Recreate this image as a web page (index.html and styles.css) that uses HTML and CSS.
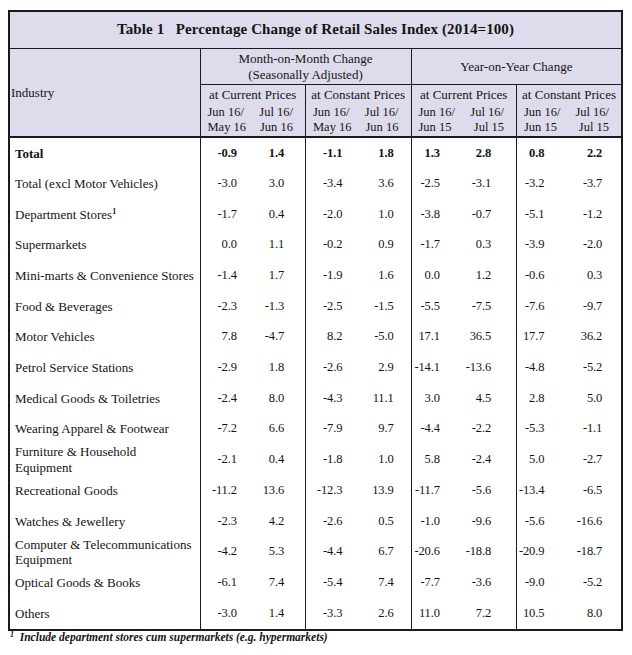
FILE: index.html
```html
<!DOCTYPE html>
<html>
<head>
<meta charset="utf-8">
<link rel="stylesheet" href="styles.css">
</head>
<body>
<table class="tbl">
  <colgroup>
    <col class="w-ind">
    <col class="w-num"><col class="w-num"><col class="w-num"><col class="w-num">
    <col class="w-num"><col class="w-num"><col class="w-num"><col class="w-num">
  </colgroup>
  <thead>
    <tr class="r-title"><th colspan="9" class="title">Table 1&nbsp;&nbsp;&nbsp;Percentage Change of Retail Sales Index (2014=100)</th></tr>
    <tr class="r-a">
      <th rowspan="3" class="ind-h">Industry</th>
      <th colspan="4" class="grp">Month-on-Month Change<br>(Seasonally Adjusted)</th>
      <th colspan="4" class="grp">Year-on-Year Change</th>
    </tr>
    <tr class="r-b">
      <th colspan="2" class="sub">at Current Prices</th>
      <th colspan="2" class="sub">at Constant Prices</th>
      <th colspan="2" class="sub">at Current Prices</th>
      <th colspan="2" class="sub">at Constant Prices</th>
    </tr>
    <tr class="r-c">
      <th class="d dl gl">Jun 16/<br>May 16</th><th class="d dr">Jul 16/<br>Jun 16</th>
      <th class="d dl gl">Jun 16/<br>May 16</th><th class="d dr">Jul 16/<br>Jun 16</th>
      <th class="d dl gl">Jun 16/<br>Jun 15</th><th class="d dr">Jul 16/<br>Jul 15</th>
      <th class="d dl gl">Jun 16/<br>Jun 15</th><th class="d dr">Jul 16/<br>Jul 15</th>
    </tr>
  </thead>
  <tbody>
    <tr class="bold"><td class="lab">Total</td><td class="n c1 gl">-0.9</td><td class="n c2">1.4</td><td class="n c3 gl">-1.1</td><td class="n c4">1.8</td><td class="n c5 gl">1.3</td><td class="n c6">2.8</td><td class="n c7 gl">0.8</td><td class="n c8">2.2</td></tr>
    <tr><td class="lab">Total (excl Motor Vehicles)</td><td class="n c1 gl">-3.0</td><td class="n c2">3.0</td><td class="n c3 gl">-3.4</td><td class="n c4">3.6</td><td class="n c5 gl">-2.5</td><td class="n c6">-3.1</td><td class="n c7 gl">-3.2</td><td class="n c8">-3.7</td></tr>
    <tr><td class="lab">Department Stores<sup class="sup">1</sup></td><td class="n c1 gl">-1.7</td><td class="n c2">0.4</td><td class="n c3 gl">-2.0</td><td class="n c4">1.0</td><td class="n c5 gl">-3.8</td><td class="n c6">-0.7</td><td class="n c7 gl">-5.1</td><td class="n c8">-1.2</td></tr>
    <tr><td class="lab">Supermarkets</td><td class="n c1 gl">0.0</td><td class="n c2">1.1</td><td class="n c3 gl">-0.2</td><td class="n c4">0.9</td><td class="n c5 gl">-1.7</td><td class="n c6">0.3</td><td class="n c7 gl">-3.9</td><td class="n c8">-2.0</td></tr>
    <tr><td class="lab">Mini-marts &amp; Convenience Stores</td><td class="n c1 gl">-1.4</td><td class="n c2">1.7</td><td class="n c3 gl">-1.9</td><td class="n c4">1.6</td><td class="n c5 gl">0.0</td><td class="n c6">1.2</td><td class="n c7 gl">-0.6</td><td class="n c8">0.3</td></tr>
    <tr><td class="lab">Food &amp; Beverages</td><td class="n c1 gl">-2.3</td><td class="n c2">-1.3</td><td class="n c3 gl">-2.5</td><td class="n c4">-1.5</td><td class="n c5 gl">-5.5</td><td class="n c6">-7.5</td><td class="n c7 gl">-7.6</td><td class="n c8">-9.7</td></tr>
    <tr><td class="lab">Motor Vehicles</td><td class="n c1 gl">7.8</td><td class="n c2">-4.7</td><td class="n c3 gl">8.2</td><td class="n c4">-5.0</td><td class="n c5 gl">17.1</td><td class="n c6">36.5</td><td class="n c7 gl">17.7</td><td class="n c8">36.2</td></tr>
    <tr><td class="lab">Petrol Service Stations</td><td class="n c1 gl">-2.9</td><td class="n c2">1.8</td><td class="n c3 gl">-2.6</td><td class="n c4">2.9</td><td class="n c5 gl">-14.1</td><td class="n c6">-13.6</td><td class="n c7 gl">-4.8</td><td class="n c8">-5.2</td></tr>
    <tr><td class="lab">Medical Goods &amp; Toiletries</td><td class="n c1 gl">-2.4</td><td class="n c2">8.0</td><td class="n c3 gl">-4.3</td><td class="n c4">11.1</td><td class="n c5 gl">3.0</td><td class="n c6">4.5</td><td class="n c7 gl">2.8</td><td class="n c8">5.0</td></tr>
    <tr><td class="lab">Wearing Apparel &amp; Footwear</td><td class="n c1 gl">-7.2</td><td class="n c2">6.6</td><td class="n c3 gl">-7.9</td><td class="n c4">9.7</td><td class="n c5 gl">-4.4</td><td class="n c6">-2.2</td><td class="n c7 gl">-5.3</td><td class="n c8">-1.1</td></tr>
    <tr><td class="lab">Furniture &amp; Household<br>Equipment</td><td class="n c1 gl">-2.1</td><td class="n c2">0.4</td><td class="n c3 gl">-1.8</td><td class="n c4">1.0</td><td class="n c5 gl">5.8</td><td class="n c6">-2.4</td><td class="n c7 gl">5.0</td><td class="n c8">-2.7</td></tr>
    <tr><td class="lab">Recreational Goods</td><td class="n c1 gl">-11.2</td><td class="n c2">13.6</td><td class="n c3 gl">-12.3</td><td class="n c4">13.9</td><td class="n c5 gl">-11.7</td><td class="n c6">-5.6</td><td class="n c7 gl">-13.4</td><td class="n c8">-6.5</td></tr>
    <tr><td class="lab">Watches &amp; Jewellery</td><td class="n c1 gl">-2.3</td><td class="n c2">4.2</td><td class="n c3 gl">-2.6</td><td class="n c4">0.5</td><td class="n c5 gl">-1.0</td><td class="n c6">-9.6</td><td class="n c7 gl">-5.6</td><td class="n c8">-16.6</td></tr>
    <tr><td class="lab">Computer &amp; Telecommunications<br>Equipment</td><td class="n c1 gl">-4.2</td><td class="n c2">5.3</td><td class="n c3 gl">-4.4</td><td class="n c4">6.7</td><td class="n c5 gl">-20.6</td><td class="n c6">-18.8</td><td class="n c7 gl">-20.9</td><td class="n c8">-18.7</td></tr>
    <tr><td class="lab">Optical Goods &amp; Books</td><td class="n c1 gl">-6.1</td><td class="n c2">7.4</td><td class="n c3 gl">-5.4</td><td class="n c4">7.4</td><td class="n c5 gl">-7.7</td><td class="n c6">-3.6</td><td class="n c7 gl">-9.0</td><td class="n c8">-5.2</td></tr>
    <tr><td class="lab">Others</td><td class="n c1 gl">-3.0</td><td class="n c2">1.4</td><td class="n c3 gl">-3.3</td><td class="n c4">2.6</td><td class="n c5 gl">11.0</td><td class="n c6">7.2</td><td class="n c7 gl">10.5</td><td class="n c8">8.0</td></tr>
  </tbody>
</table>
<p class="note"><sup class="note-sup">1</sup>&nbsp;&nbsp;Include department stores cum supermarkets (e.g. hypermarkets)</p>
</body>
</html>
```

FILE: styles.css
```css
html, body {
  margin: 0;
  padding: 0;
  background: #ffffff;
}

body {
  font-family: "Liberation Serif", "Times New Roman", serif;
  color: #141414;
  font-size: 13px;
}

.tbl {
  margin: 10px 0 0 8px;
  width: 613px;
  border-collapse: collapse;
  table-layout: fixed;
  border: 2px solid #1a1a1a;
}

.w-ind { width: 191px; }
.w-num { width: 52.75px; }

.tbl th, .tbl td {
  padding: 0;
  font-weight: normal;
  line-height: 15.5px;
  white-space: nowrap;
}

.tbl thead th {
  background: #dedcec;
}

.r-title th {
  height: 36px;
  font-weight: bold;
  font-size: 15px;
  text-align: center;
  border-bottom: 1px solid #1a1a1a;
  letter-spacing: 0.1px;
}

.r-a th {
  height: 35px;
  text-align: center;
  border-bottom: 1px solid #1a1a1a;
}

.ind-h {
  text-align: left !important;
  padding-left: 1px !important;
  vertical-align: middle;
  border-right: 1px solid #1a1a1a;
  border-bottom: 2px solid #1a1a1a !important;
}

.grp {
  border-left: 1px solid #1a1a1a;
}

.r-b th {
  height: 19px;
  text-align: center;
  border-left: 1px solid #1a1a1a;
  vertical-align: middle;
}

.r-c th {
  height: 32px;
  border-bottom: 2px solid #1a1a1a;
  vertical-align: middle;
  font-size: 12.5px;
}

.gl {
  border-left: 1px solid #1a1a1a;
}

.dl {
  text-align: left;
  padding-left: 7px !important;
}

.dr {
  text-align: right;
  padding-right: 12px !important;
}

.tbl tbody td {
  height: 30.65px;
  vertical-align: middle;
}

.lab {
  padding-left: 5px !important;
  border-right: 1px solid #1a1a1a;
}

.n {
  text-align: right;
  font-size: 12.5px;
  letter-spacing: -0.15px;
}

.c1 { padding-right: 16px !important; }
.c2 { padding-right: 21px !important; }
.c3 { padding-right: 16px !important; }
.c4 { padding-right: 17px !important; }
.c5 { padding-right: 24px !important; }
.c6 { padding-right: 25px !important; }
.c7 { padding-right: 25px !important; }
.c8 { padding-right: 19px !important; }

.bold td {
  font-weight: bold;
}

.sup {
  font-size: 8px;
  line-height: 0;
  vertical-align: 5px;
  font-weight: bold;
}

.note {
  margin: 0 0 0 10px;
  font-size: 11.5px;
  font-style: italic;
  font-weight: bold;
  line-height: 13px;
}

.note-sup {
  font-size: 8px;
  vertical-align: 4px;
  line-height: 0;
}
```
